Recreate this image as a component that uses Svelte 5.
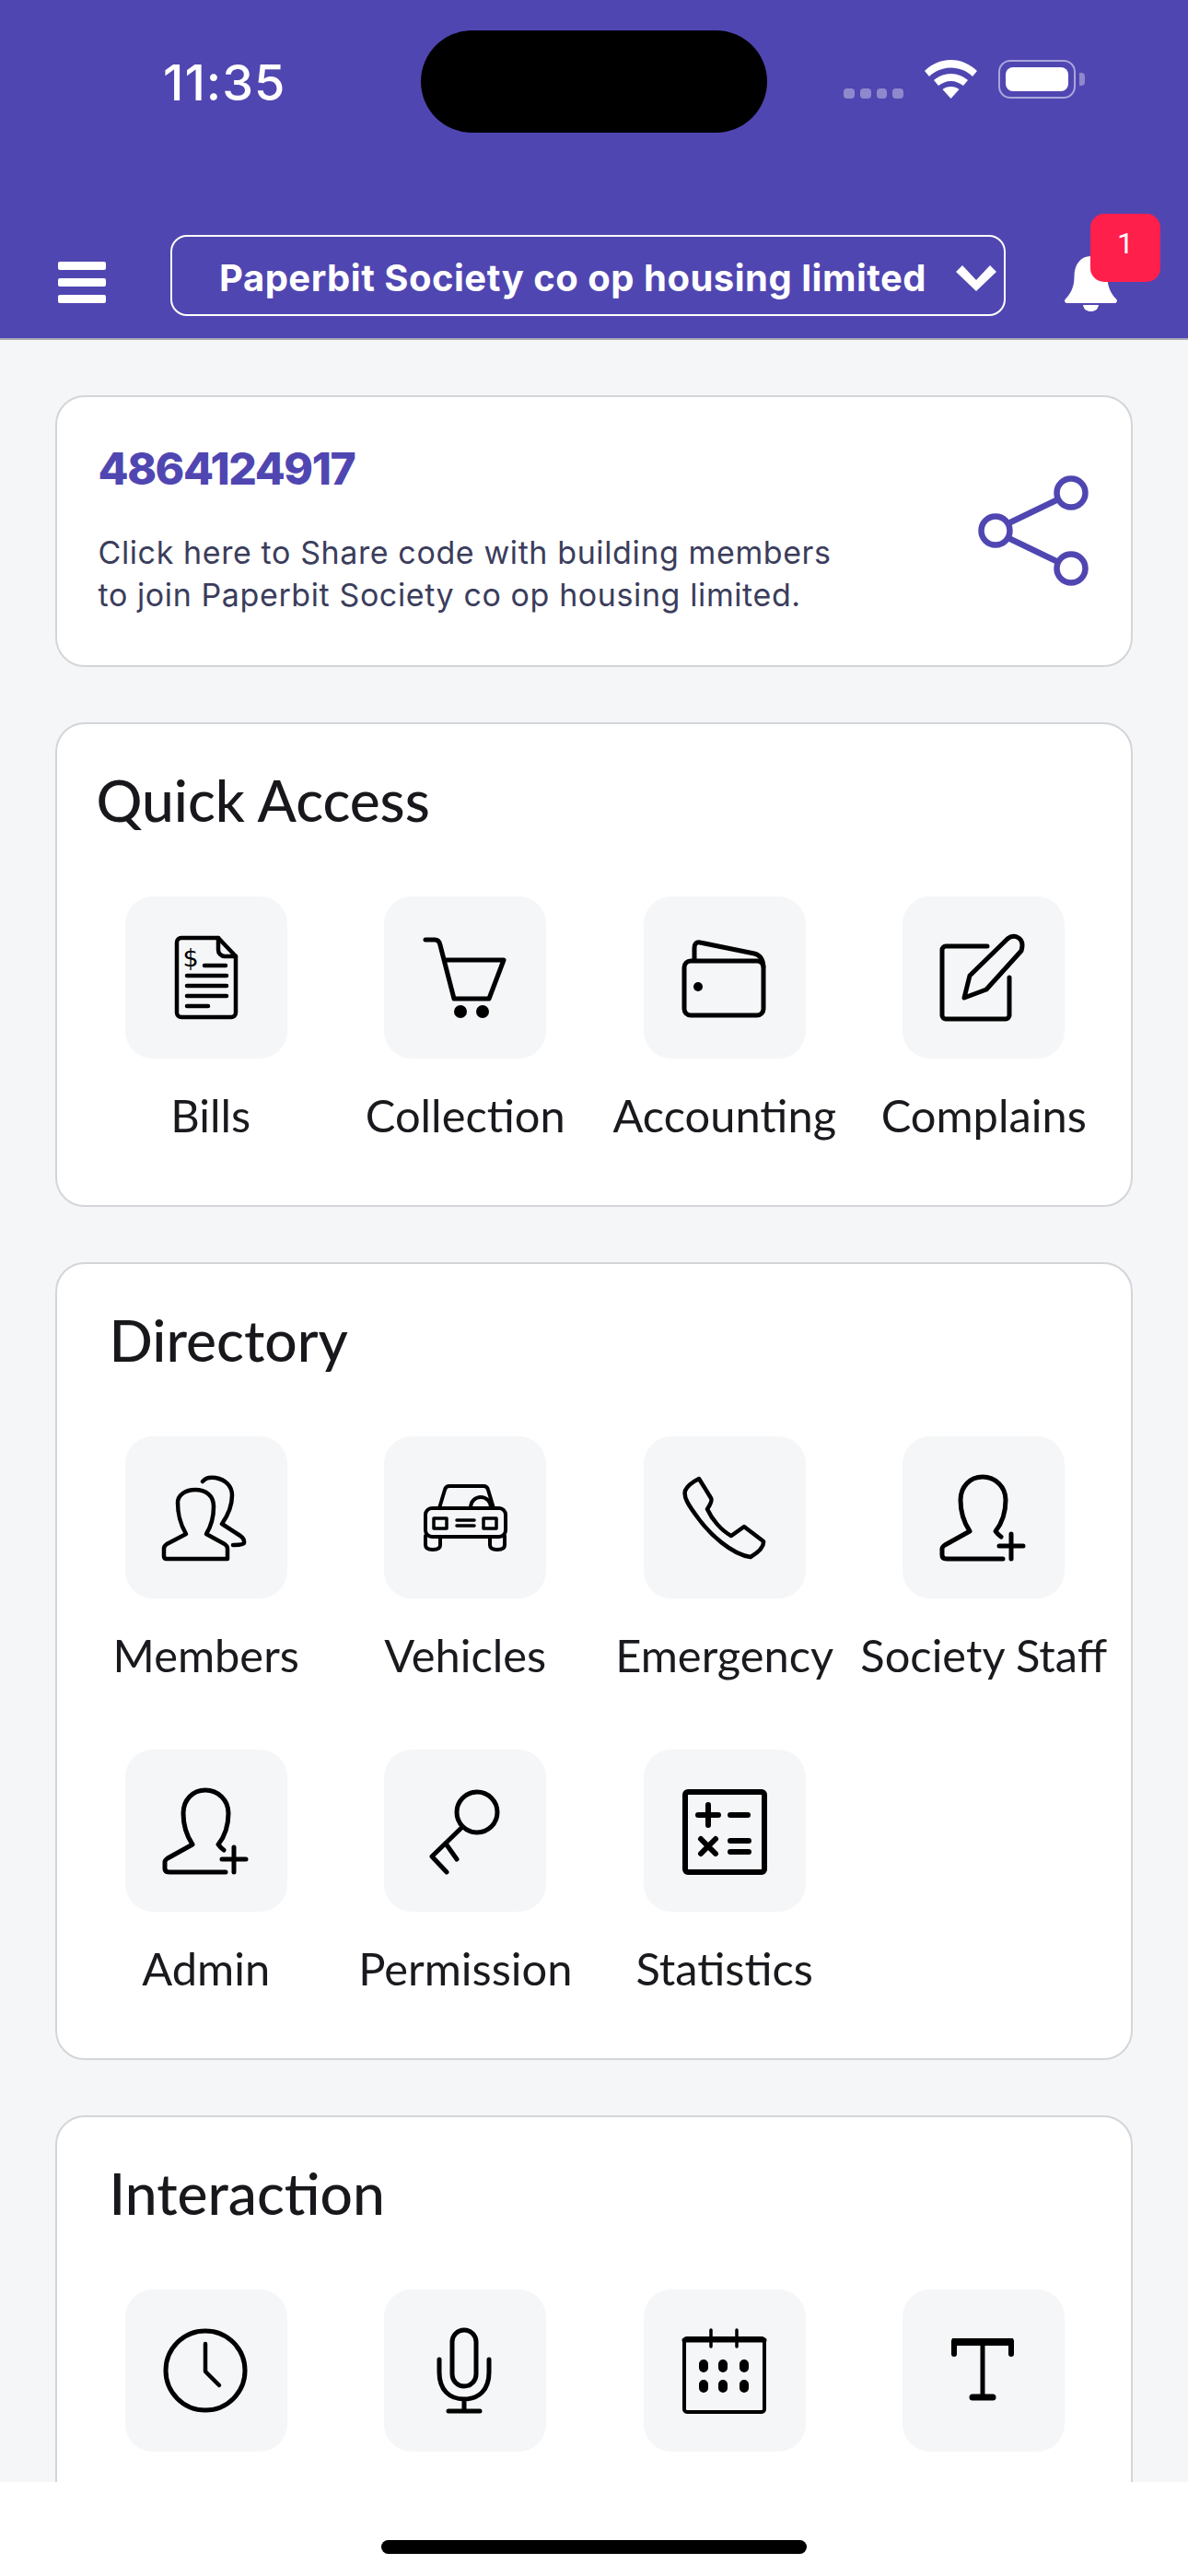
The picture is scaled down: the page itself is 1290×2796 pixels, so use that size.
<script>
	const quickAccess = [
		{ id: 'bills', label: 'Bills' },
		{ id: 'cart', label: 'Collection' },
		{ id: 'wallet', label: 'Accounting' },
		{ id: 'edit', label: 'Complains' }
	]
	const directory = [
		{ id: 'members', label: 'Members' },
		{ id: 'car', label: 'Vehicles' },
		{ id: 'phone', label: 'Emergency' },
		{ id: 'useradd', label: 'Society Staff' },
		{ id: 'useradd', label: 'Admin' },
		{ id: 'key', label: 'Permission' },
		{ id: 'calc', label: 'Statistics' }
	]
	// labels of this row sit below the fold, under the home bar
	const interaction = [
		{ id: 'clock' },
		{ id: 'mic' },
		{ id: 'calendar' },
		{ id: 'text' }
	]
</script>

{#snippet glyph(id)}
	<svg class="glyph" viewBox="0 0 176 176" fill="none" stroke="#000" stroke-width="5" stroke-linecap="round" stroke-linejoin="round">
		{#if id === 'bills'}
			<path stroke-width="4.5" d="M101 45H61a5 5 0 0 0-5 5v76a5 5 0 0 0 5 5h54a5 5 0 0 0 5-5V65L101 45Z" />
			<path stroke-width="4.5" d="M101 45v13a7 7 0 0 0 7 7h12" />
			<text class="dollar" x="71" y="76" text-anchor="middle" fill="#000" stroke="none">$</text>
			<path stroke-width="4.5" d="M86 75h23M67 86h43M67 97h43M67 108h43M67 119h23" />
		{:else if id === 'cart'}
			<path d="M45 47h10q5 0 6 6l15 58h38l16-42H67" />
			<circle cx="83" cy="125" r="7" fill="#000" stroke="none" />
			<circle cx="107" cy="125" r="7" fill="#000" stroke="none" />
		{:else if id === 'wallet'}
			<rect x="44" y="70" width="86" height="59" rx="7" />
			<path d="M55 69V56q0-7 6-6l59 12q9 2 10 14" />
			<circle cx="59" cy="98" r="5" fill="#000" stroke="none" />
		{:else if id === 'edit'}
			<path d="M92 54H47a4 4 0 0 0-4 4v71a4 4 0 0 0 4 4h65a4 4 0 0 0 4-4V88" />
			<path d="M67 110l6-24 41-40q6-5 12-1t3 14L91 101l-24 9Z" />
		{:else if id === 'members'}
			<path stroke-width="4.5" d="M45 133q-3 0-3-3v-8q0-3 3-5l21-11C58 92 57 82 57 72c0-8 8-14 19-14s20 6 20 18c0 10-3 22-8 30l20 11q3 2 3 5v11H45Z" />
			<path stroke-width="4.5" d="M84 49c3-4 8-5 14-4 11 2 18 9 18 19 0 11-4 21-11 31l20 13q4 3 4 6v2q0 2-12 2" />
		{:else if id === 'car'}
			<path stroke-width="4" d="M60 78l6-20q1-4 5-4h37q4 0 5 4l6 20" />
			<path stroke-width="4" d="M94 78c0-16 22-16 22 0" />
			<rect x="45" y="78" width="87" height="31" rx="7" stroke-width="4" />
			<path stroke-width="3.500" d="M54 89h14v11H54zM108 89h14v11h-14zM79 91h19M79 97h19" />
			<path stroke-width="4" d="M45 108v10q0 5 8 5t8-5v-9M115 109v9q0 5 8 5t8-5v-10" />
		{:else if id === 'phone'}
			<path stroke-width="4.5" d="M60 46l13 21q2 3-4 12c5 11 15 23 26 29l14-10 21 16q1 8-14 17C95 128 72 106 60 90 48 74 43 66 45 59q3-7 15-13Z" />
		{:else if id === 'useradd'}
			<path d="M109 133H48q-5 0-5-4v-7q0-2 3-4l27-15c-6-9-10-22-10-34 0-14 10-25 24-25s25 11 25 25c0 12-3 24-11 34q3 4 6 6" />
			<path d="M105 119h26M118 106v27" />
		{:else if id === 'key'}
			<circle cx="101" cy="68" r="22" />
			<path d="M84 85l-32 31 16 17M67 102l12 17" />
		{:else if id === 'calc'}
			<rect x="45" y="46" width="86" height="87" rx="3" stroke-width="6" />
			<path stroke-width="6" d="M59 71h22M70 60v22M94 71h19M62 97l16 16M78 97l-16 16M94 99h20M94 111h20" />
		{:else if id === 'clock'}
			<circle cx="87" cy="88" r="43" />
			<path stroke-width="4.5" d="M87 59v30l15 15" />
		{:else if id === 'mic'}
			<rect x="74" y="44" width="26" height="61" rx="13" stroke-width="5" />
			<path stroke-width="5" d="M60 76v14c0 19 11 29 27 29s27-10 27-29V76M87 119v12M70 132h34" />
		{:else if id === 'calendar'}
			<rect x="44" y="53" width="87" height="80" rx="3" stroke-width="4" />
			<path stroke-width="5" d="M44 55h87" />
			<path stroke-width="3.500" d="M73 44v18M101 44v18" />
			<path stroke-width="10" d="M65 81v4M86 81v4M109 81v4M65 103v4M86 103v4M109 103v4" />
		{:else if id === 'text'}
			<path d="M56 70V56h62v14" stroke-width="6" />
			<path stroke="none" fill="#000" d="M54 53h66v8H54z" />
			<path stroke-width="5" d="M87 56v60" />
			<path stroke-width="7" d="M76 117h22" />
		{/if}
	</svg>
{/snippet}

{#snippet tiles(items)}
	<div class="grid">
		{#each items as item}
			<div class="item">
				<div class="tile">{@render glyph(item.id)}</div>
				{#if item.label}
					<span class="label" class:nudge={item.id === 'bills'}>{item.label}</span>
				{/if}
			</div>
		{/each}
	</div>
{/snippet}

<div class="page">
	<header class="header">
		<div class="status">
			<span class="time">11:35</span>
			<div class="island"></div>
			<div class="indicators">
				<div class="signal"><i></i><i></i><i></i><i></i></div>
				<svg class="wifi" viewBox="0 0 57 42" fill="#fff">
					<path d="M28.5 0C17.5 0 8 4.5 0 12l5 6c6.500-6 14.500-9.500 23.500-9.500S46 12 52 18l5-6C49 4.500 39.500 0 28.500 0Z" />
					<path d="M28.500 15C21 15 15 18 10 22l5 6c4-3 8.500-5 13.500-5s9.500 2 13.500 5l5-6c-5-4-11-7-18.500-7Z" />
					<path d="M28.500 29c-3.500 0-6.500 1-9 3l9 10 9-10c-2.500-2-5.500-3-9-3Z" />
				</svg>
				<div class="battery"><div class="charge"></div></div>
				<div class="cap"></div>
			</div>
		</div>
		<div class="toolbar">
			<div class="menu"><i></i><i></i><i></i></div>
			<div class="select">
				<span>Paperbit Society co op housing limited</span>
				<svg class="chevron" viewBox="0 0 44 28" fill="#fff"><path d="M0 7l7-7 15 16L37 0l7 7-22 21Z" /></svg>
			</div>
			<div class="bell">
				<svg viewBox="0 0 57 60" fill="#fff">
					<path d="M28.500 0c-11 0-18 9-18 22 0 12-4 19-10 25-1 2 0 4 2 4h52c2 0 3-2 2-4-6-6-10-13-10-25C46.500 9 39.500 0 28.500 0Z" />
					<path d="M20 53h17c-1 5-4 7-8.500 7S21 58 20 53Z" />
				</svg>
				<span class="badge">1</span>
			</div>
		</div>
	</header>

	<main class="main">
		<section class="card share">
			<div>
				<div class="code">4864124917</div>
				<p class="hint">Click here to Share code with building members<br />to join Paperbit Society co op housing limited.</p>
			</div>
			<svg class="share-icon" viewBox="0 0 120 120" fill="none" stroke="#5046b1" stroke-width="6.500">
				<circle cx="101" cy="19" r="15.500" />
				<circle cx="19" cy="60" r="15.500" />
				<circle cx="101" cy="101" r="15.500" />
				<path d="M33 52l54-26M33 68l54 26" />
			</svg>
		</section>

		<section class="card">
			<h2 class="title quick">Quick Access</h2>
			{@render tiles(quickAccess)}
		</section>

		<section class="card">
			<h2 class="title">Directory</h2>
			{@render tiles(directory)}
		</section>

		<section class="card">
			<h2 class="title">Interaction</h2>
			{@render tiles(interaction)}
		</section>
	</main>

	<footer class="home"><div class="home-bar"></div></footer>
</div>

<style>
	:global(body) {
		margin: 0;
		background: #fff;
	}

	.page {
		width: 1290px;
		height: 2796px;
		display: flex;
		flex-direction: column;
		overflow: hidden;
		background: #f5f6f8;
	}

	.header {
		height: 369px;
		box-sizing: border-box;
		flex-shrink: 0;
		background: #5046b1;
		border-bottom: 2px solid #a9a9b5;
	}

	.status {
		display: flex;
		padding: 33px 0 0 177px;
		height: 111px;
	}

	.time {
		width: 280px;
		font: 500 54px/111px Inter, sans-serif;
		letter-spacing: 1px;
		color: #fff;
		margin-top: 1px;
	}

	.island {
		width: 376px;
		height: 111px;
		background: #000;
		border-radius: 56px;
	}

	.indicators {
		display: flex;
		align-items: flex-end;
		margin: 32px 0 0 83px;
		height: 42px;
	}

	.signal {
		display: flex;
		gap: 6px;
		width: 65px;
	}

	.signal i {
		width: 12px;
		height: 11px;
		border-radius: 4px;
		background: #8f88cd;
	}

	.wifi {
		width: 57px;
		height: 42px;
		margin-left: 23px;
	}

	.battery {
		width: 84px;
		height: 42px;
		margin-left: 23px;
		box-sizing: border-box;
		padding: 6px;
		border: 2.500px solid #aaa5dc;
		border-radius: 13px;
	}

	.charge {
		height: 100%;
		background: #fff;
		border-radius: 8px;
	}

	.cap {
		width: 6px;
		height: 14px;
		margin: 0 0 14px 4px;
		border-radius: 0 4px 4px 0;
		background: #8f88cd;
	}

	.toolbar {
		display: flex;
		align-items: center;
		padding: 111px 0 0 63px;
	}

	.menu {
		width: 52px;
		margin-top: 14px;
		display: flex;
		flex-direction: column;
		gap: 9px;
	}

	.menu i {
		height: 9px;
		background: #fff;
		border-radius: 2px;
	}

	.select {
		width: 907px;
		height: 88px;
		box-sizing: border-box;
		margin-left: 70px;
		padding: 0 8px 0 51px;
		display: flex;
		align-items: center;
		justify-content: space-between;
		border: 2px solid #fff;
		border-radius: 18px;
	}

	.select span {
		margin-top: 5px;
		font: 700 40px/1 Inter, sans-serif;
		letter-spacing: 0.5px;
		color: #fff;
		white-space: nowrap;
	}

	.chevron {
		width: 44px;
		height: 28px;
		margin-top: 5px;
	}

	.bell {
		position: relative;
		width: 57px;
		height: 60px;
		margin: 18px 0 0 64px;
	}

	.bell svg {
		display: block;
		width: 57px;
		height: 60px;
	}

	.badge {
		position: absolute;
		left: 28px;
		top: -46px;
		width: 76px;
		height: 74px;
		padding-top: 8px;
		box-sizing: border-box;
		border-radius: 15px;
		background: #ff1f4b;
		color: #fff;
		text-align: center;
		font: 400 32px/48px Roboto, sans-serif;
	}

	.main {
		flex: 1;
		min-height: 0;
		overflow: hidden;
		padding: 60px 60px 0;
		display: flex;
		flex-direction: column;
		gap: 60px;
	}

	.card {
		flex-shrink: 0;
		box-sizing: border-box;
		padding: 43.500px 19px 68.500px 21px;
		background: #fff;
		border: 2.500px solid #d4d5d8;
		border-radius: 32px;
	}

	.share {
		height: 295px;
		padding: 47.500px 46.500px 0 45.500px;
		display: flex;
		justify-content: space-between;
	}

	.code {
		margin-left: -1px;
		font: 800 48px/60px Inter, sans-serif;
		letter-spacing: -1.400px;
		color: #5046b1;
	}

	.hint {
		margin: 38px 0 0 -1px;
		font: 400 34px/46px Inter, sans-serif;
		letter-spacing: 0.6px;
		color: #3b3d5c;
	}

	.share-icon {
		width: 120px;
		height: 120px;
		margin-top: 37px;
	}

	.title {
		margin: 0 0 67px 35.500px;
		font: 500 62.300px/76px Lato, sans-serif;
		color: #18181c;
	}

	.title.quick {
		margin-left: 21.500px;
	}

	.grid {
		display: grid;
		grid-template-columns: repeat(4, 1fr);
		row-gap: 73px;
	}

	.item {
		display: flex;
		flex-direction: column;
		align-items: center;
	}

	.tile {
		width: 176px;
		height: 176px;
		border-radius: 30px;
		background: #f5f6f8;
	}

	.glyph {
		display: block;
		width: 176px;
		height: 176px;
	}

	.dollar {
		font: 400 27px "DejaVu Sans", sans-serif;
	}

	.label {
		margin-top: 31px;
		font: 400 48.800px/60px Lato, sans-serif;
		color: #1a1a1e;
		white-space: nowrap;
	}

	.label.nudge {
		margin-left: 10px;
	}

	.home {
		height: 102px;
		flex-shrink: 0;
		background: #fff;
		display: flex;
		justify-content: center;
		padding-top: 63px;
		box-sizing: border-box;
	}

	.home-bar {
		width: 462px;
		height: 15px;
		border-radius: 8px;
		background: #000;
	}
</style>
